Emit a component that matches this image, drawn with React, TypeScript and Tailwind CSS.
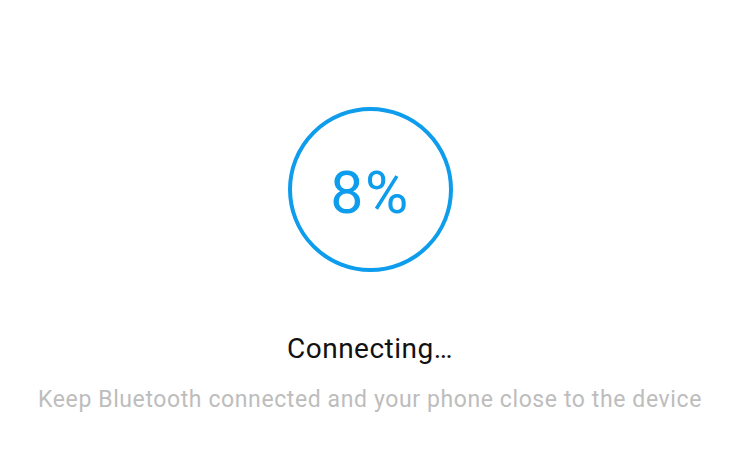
export default function App() {
  return (
    <div
      className="w-[735px] h-[457px] bg-white flex flex-col items-center pt-[107px] pl-[5px]"
      style={{ fontFamily: "Roboto, 'Liberation Sans', sans-serif" }}
    >
      <div className="w-[165px] h-[165px] rounded-full border-[4px] border-[#0e9cec] flex items-center justify-center">
        <span className="text-[59px] leading-none tracking-[1.5px] text-[#0e9cec] mt-[5px]">8%</span>
      </div>
      <div className="mt-[63px] text-[28px] leading-none tracking-[0.5px] text-[#111111]">Connecting…</div>
      <div className="mt-[25px] text-[23px] leading-none tracking-[0.6px] text-[#bdbdbd]">
        Keep Bluetooth connected and your phone close to the device
      </div>
    </div>
  );
}
